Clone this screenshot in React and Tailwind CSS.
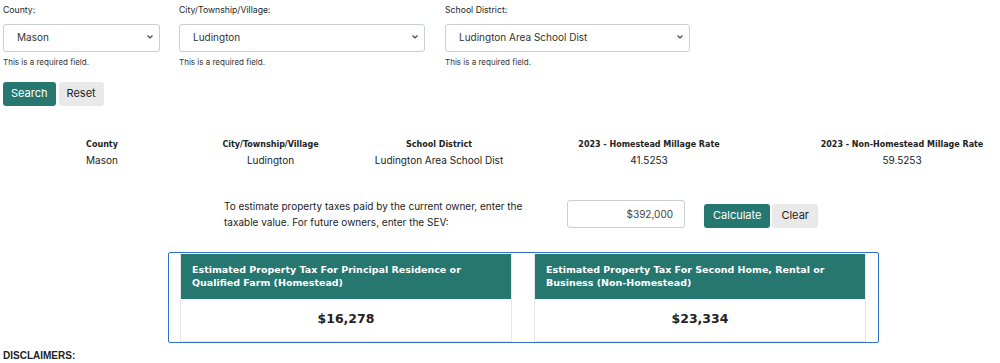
import { useState } from "react";

const teal = "bg-[#267770]";

function Field({ label, value, options, width }) {
  return (
    <div className={`flex flex-col ${width}`}>
      <label className="text-[8.7px] text-[#212529] leading-[12px] mb-[7px] mt-[4px]">{label}</label>
      <div className="relative">
        <select
          defaultValue={value}
          className="appearance-none w-full h-[28px] border border-[#c9ced4] rounded-[3px] bg-white pl-[13px] pr-8 text-[10px] text-[#333]"
        >
          {options.map(o => <option key={o}>{o}</option>)}
        </select>
        <svg className="absolute right-[6px] top-[11px] pointer-events-none" width="8" height="6" viewBox="0 0 8 6">
          <path d="M1.5 1.5l2.5 2.5 2.5-2.5" fill="none" stroke="#444" strokeWidth="1.2" />
        </svg>
      </div>
      <p className="text-[8px] text-[#333] mt-[4px] leading-[12px]">This is a required field.</p>
    </div>
  );
}

function Col({ head, value, w }) {
  return (
    <div className={`${w} shrink-0 text-center`}>
      <div className="font-['DejaVu_Sans'] font-bold text-[8px] text-[#222] leading-[12px]">{head}</div>
      <div className="text-[10px] text-[#222] leading-[14px] mt-[2px]">{value}</div>
    </div>
  );
}

function Card({ title, amount }) {
  return (
    <div className="w-[332px] border border-[#e6e6e6] border-t-0">
      <div className={`${teal} h-[45px] px-[11px] pt-[9px] text-white font-['DejaVu_Sans'] font-bold text-[9.5px] leading-[13px]`}>
        {title}
      </div>
      <div className="h-[42px] flex items-center justify-center font-['DejaVu_Sans'] font-bold text-[12.5px] text-[#222]">
        {amount}
      </div>
    </div>
  );
}

export default function App() {
  const [value, setValue] = useState("$392,000");
  return (
    <div className="w-[1000px] h-[363px] overflow-hidden bg-white font-['Inter',sans-serif] text-[#212529]">
      <div className="flex pl-[3px]">
        <Field label="County:" value="Mason" options={["Mason"]} width="w-[157px]" />
        <div className="w-[19px]" />
        <Field label="City/Township/Village:" value="Ludington" options={["Ludington"]} width="w-[246px]" />
        <div className="w-[20px]" />
        <Field label="School District:" value="Ludington Area School Dist" options={["Ludington Area School Dist"]} width="w-[245px]" />
      </div>

      <div className="flex gap-[3px] pl-[3px] mt-[14px]">
        <button className={`${teal} text-white text-[11px] h-[24px] px-[8px] rounded-[3px]`}>Search</button>
        <button className="bg-[#e9e9e9] text-[#222] text-[11px] h-[24px] px-[8px] rounded-[3px]">Reset</button>
      </div>

      <div className="flex mt-[33px]">
        <Col head="County" value="Mason" w="w-[204px]" />
        <Col head="City/Township/Village" value="Ludington" w="w-[133px]" />
        <Col head="School District" value="Ludington Area School Dist" w="w-[204px]" />
        <Col head="2023 - Homestead Millage Rate" value="41.5253" w="w-[216px]" />
        <Col head="2023 - Non-Homestead Millage Rate" value="59.5253" w="w-[290px]" />
      </div>

      <div className="flex items-center mt-[31px] pl-[224px]">
        <p className="w-[310px] text-[10px] leading-[16px] text-[#222]">
          To estimate property taxes paid by the current owner, enter the taxable value. For future owners, enter the SEV:
        </p>
        <input
          value={value}
          onChange={e => setValue(e.target.value)}
          className="ml-[33px] w-[118px] h-[28px] border border-[#c9ced4] rounded-[3px] text-right pr-[11px] text-[10px] text-[#444]"
        />
        <button className={`${teal} ml-[19px] mt-[4px] text-white text-[11px] h-[24px] px-[9px] rounded-[3px]`}>Calculate</button>
        <button className="bg-[#e9e9e9] ml-[2px] mt-[4px] text-[#222] text-[11px] h-[24px] px-[9px] rounded-[3px]">Clear</button>
      </div>

      <div className="ml-[168px] mt-[22px] w-[711px] border border-[#2f6fd0] rounded-[2px] flex gap-[22px] pl-[11px] pt-[1px]">
        <Card title="Estimated Property Tax For Principal Residence or Qualified Farm (Homestead)" amount="$16,278" />
        <Card title="Estimated Property Tax For Second Home, Rental or Business (Non-Homestead)" amount="$23,334" />
      </div>

      <div className="pl-[3px] mt-[6px] text-[10px] leading-[13px] font-bold font-['Liberation_Sans'] text-[#222]">DISCLAIMERS:</div>
    </div>
  );
}
